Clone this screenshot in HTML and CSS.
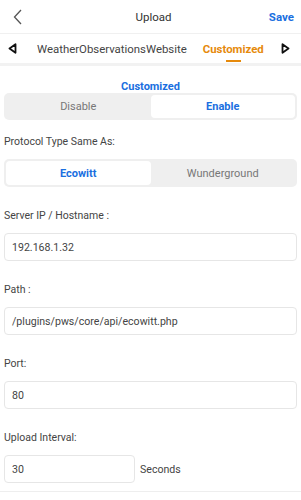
FILE: index.html
```html
<!DOCTYPE html>
<html lang="en">
<head>
    <meta charset="UTF-8">
    <meta name="viewport" content="width=device-width, initial-scale=1.0">
    <title>Upload</title>
    <link rel="stylesheet" href="styles.css">
</head>
<body>
    <div class="header">
        <span class="back">
            <svg width="10" height="16" viewBox="0 0 10 16"><path d="M8 1 L1.5 8 L8 15" fill="none" stroke="#555" stroke-width="1.3"/></svg>
        </span>
        <span class="title">Upload</span>
        <span class="save">Save</span>
    </div>

    <div class="tabs">
        <span class="tab-arrow">
            <svg width="9" height="11" viewBox="0 0 9 11"><path d="M7.5 1.2 L1.5 5.5 L7.5 9.8 Z" fill="none" stroke="#111" stroke-width="1.8" stroke-linejoin="round"/></svg>
        </span>
        <div class="tab-list">
            <span class="tab">WeatherObservationsWebsite</span>
            <span class="tab active">Customized</span>
        </div>
        <span class="tab-arrow">
            <svg width="9" height="11" viewBox="0 0 9 11"><path d="M1.5 1.2 L7.5 5.5 L1.5 9.8 Z" fill="none" stroke="#111" stroke-width="1.8" stroke-linejoin="round"/></svg>
        </span>
    </div>

    <div class="content">
        <div class="section-title">Customized</div>
        <div class="segment">
            <div class="seg-item">Disable</div>
            <div class="seg-item selected">Enable</div>
        </div>

        <div class="label first">Protocol Type Same As:</div>
        <div class="segment tall">
            <div class="seg-item selected">Ecowitt</div>
            <div class="seg-item">Wunderground</div>
        </div>

        <div class="label">Server IP / Hostname :</div>
        <div class="field">192.168.1.32</div>

        <div class="label">Path :</div>
        <div class="field">/plugins/pws/core/api/ecowitt.php</div>

        <div class="label">Port:</div>
        <div class="field">80</div>

        <div class="label">Upload Interval:</div>
        <div class="interval-row">
            <div class="field short">30</div>
            <span class="unit">Seconds</span>
        </div>
    </div>
</body>
</html>
```

FILE: styles.css
```css
body {
    font-family: Roboto, 'Noto Sans', sans-serif;
    margin: 0;
    padding: 0;
    background: #fff;
    color: #333;
    font-size: 11px;
}

.header {
    height: 34px;
    display: flex;
    align-items: center;
    justify-content: space-between;
    padding: 0 7px 0 13px;
    border-bottom: 1px solid #f0f0f0;
    box-sizing: border-box;
}

.back {
    display: flex;
    width: 40px;
}

.title {
    font-size: 11.5px;
    color: #333;
}

.save {
    width: 40px;
    text-align: right;
    color: #1a6fe0;
    font-weight: bold;
    font-size: 11.5px;
}

.tabs {
    height: 29px;
    display: flex;
    align-items: center;
    padding: 0 8px;
    border-bottom: 3px solid #f2f2f2;
}

.tab-arrow {
    display: flex;
    width: 12px;
}

.tab-list {
    flex: 1;
    display: flex;
    gap: 16px;
    padding-left: 17px;
    height: 100%;
}

.tab {
    display: flex;
    align-items: center;
    color: #444;
    font-size: 11.4px;
    position: relative;
}

.tab.active {
    color: #e68a0c;
    font-weight: bold;
}

.tab.active::after {
    content: "";
    position: absolute;
    left: 50%;
    bottom: 1px;
    width: 15px;
    margin-left: -7px;
    height: 2px;
    background: #e68a0c;
}

.content {
    padding: 0 4px;
}

.section-title {
    text-align: center;
    color: #1a6fe0;
    font-weight: bold;
    font-size: 11px;
    line-height: 13px;
    margin-top: 14px;
}

.segment {
    display: flex;
    background: #efefef;
    border-radius: 5px;
    padding: 2px;
    height: 27px;
    box-sizing: border-box;
}

.segment.tall {
    height: 28px;
}

.seg-item {
    flex: 1;
    display: flex;
    align-items: center;
    justify-content: center;
    color: #777;
    font-size: 11px;
    border-radius: 4px;
}

.seg-item.selected {
    background: #fff;
    color: #1a6fe0;
    font-weight: bold;
}

.label {
    color: #444;
    font-size: 10.5px;
    line-height: 13px;
    margin: 22px 0 11px;
}

.label.first {
    margin: 15px 0 11px;
}

.field {
    border: 1px solid #e6e6e6;
    border-radius: 4px;
    height: 28px;
    box-sizing: border-box;
    display: flex;
    align-items: center;
    padding-left: 7px;
    color: #444;
    font-size: 10.6px;
}

.interval-row {
    display: flex;
    align-items: center;
    gap: 5px;
    padding: 0 0 8px 4px;
    border-bottom: 1px solid #eee;
    margin: 0 -4px;
}

.field.short {
    width: 131px;
}

.unit {
    color: #444;
    font-size: 10.6px;
}
```
